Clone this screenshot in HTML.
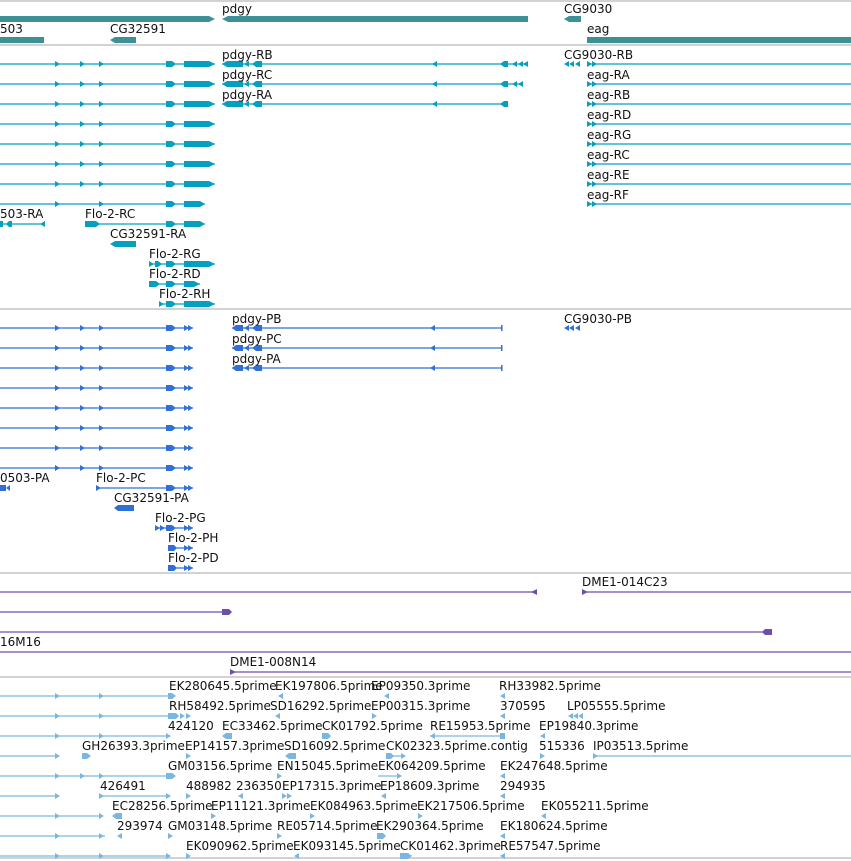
<!DOCTYPE html>
<html><head><meta charset="utf-8"><style>
html,body{margin:0;padding:0;background:#fff;width:851px;height:861px;overflow:hidden}
svg{display:block}
text{font-family:"DejaVu Sans","Liberation Sans",sans-serif;font-size:12px;fill:#111}
</style></head><body>
<svg width="851" height="861" viewBox="0 0 851 861" xmlns="http://www.w3.org/2000/svg">
<defs>
<polygon id="ar" points="0,-3 5,0 0,3"/>
<polygon id="al" points="5,-3 0,0 5,3"/>
</defs>
<g stroke="#c4c4c4" stroke-width="1.5">
<line x1="0" y1="1" x2="851" y2="1"/><line x1="0" y1="45" x2="851" y2="45"/>
<line x1="0" y1="309" x2="851" y2="309"/><line x1="0" y1="573" x2="851" y2="573"/>
<line x1="0" y1="677" x2="851" y2="677"/><line x1="0" y1="858" x2="851" y2="858"/>
</g>
<!-- gene track -->
<g fill="#3d9196">
<polygon points="0,16 209,16 215,19 209,22 0,22"/>
<polygon points="222,19 228,16 528,16 528,22 228,22"/>
<polygon points="564,19 569,16 581,16 581,22 569,22"/>
<rect x="0" y="37" width="44" height="6"/>
<polygon points="110,40 115,37 136,37 136,43 115,43"/>
<rect x="587" y="37" width="264" height="6"/>
</g>
<text x="222" y="13">pdgy</text><text x="564" y="13">CG9030</text>
<text x="0" y="33">503</text><text x="110" y="33">CG32591</text><text x="587" y="33">eag</text>
<!-- transcripts -->
<g fill="#069fc0" stroke="#069fc0">
<g stroke-width="1.2">
<line x1="0" y1="64" x2="215" y2="64"/><line x1="0" y1="84" x2="215" y2="84"/><line x1="0" y1="104" x2="215" y2="104"/>
<line x1="0" y1="124" x2="215" y2="124"/><line x1="0" y1="144" x2="215" y2="144"/><line x1="0" y1="164" x2="215" y2="164"/>
<line x1="0" y1="184" x2="215" y2="184"/><line x1="0" y1="204" x2="205" y2="204"/>
<line x1="222" y1="64" x2="528" y2="64"/><line x1="222" y1="84" x2="520" y2="84"/><line x1="222" y1="104" x2="507" y2="104"/>
<line x1="587" y1="64" x2="851" y2="64"/><line x1="587" y1="84" x2="851" y2="84"/><line x1="587" y1="104" x2="851" y2="104"/>
<line x1="587" y1="124" x2="851" y2="124"/><line x1="587" y1="144" x2="851" y2="144"/><line x1="587" y1="164" x2="851" y2="164"/>
<line x1="587" y1="184" x2="851" y2="184"/><line x1="587" y1="204" x2="851" y2="204"/>
<line x1="0" y1="224" x2="45" y2="224"/><line x1="85" y1="224" x2="205" y2="224"/>
<line x1="149" y1="264" x2="215" y2="264"/><line x1="149" y1="284" x2="200" y2="284"/><line x1="159" y1="304" x2="215" y2="304"/>
</g>
<g stroke="none">
<!-- left repeating exons -->
<g id="lx"><use href="#ar" x="55" y="64"/><use href="#ar" x="80" y="64"/><use href="#ar" x="99" y="64"/>
<polygon points="166,61 172,61 176,64 172,67 166,67"/><polygon points="184,61 209,61 215,64 209,67 184,67"/></g>
<use href="#lx" y="20"/><use href="#lx" y="40"/><use href="#lx" y="60"/><use href="#lx" y="80"/><use href="#lx" y="100"/><use href="#lx" y="120"/>
<use href="#ar" x="55" y="204"/><use href="#ar" x="99" y="204"/><polygon points="166,201 172,201 176,204 172,207 166,207"/><polygon points="184,201 200,201 205,204 200,207 184,207"/>
<!-- pdgy -->
<g id="pd"><polygon points="222,64 227,61 243,61 243,67 227,67"/><use href="#al" x="244" y="64"/><polygon points="252,64 256,61 262,61 262,67 256,67"/><use href="#al" x="432" y="64"/></g>
<use href="#pd" y="20"/><use href="#pd" y="40"/>
<polygon points="500,64 504,61 508,61 508,67 504,67"/><use href="#al" x="512" y="64"/><use href="#al" x="518" y="64"/><use href="#al" x="523" y="64"/>
<polygon points="500,84 504,81 508,81 508,87 504,87"/><use href="#al" x="512" y="84"/><use href="#al" x="518" y="84"/>
<polygon points="500,104 504,101 508,101 508,107 504,107"/>
<use href="#al" x="564" y="64"/><use href="#al" x="569" y="64"/><use href="#al" x="575" y="64"/>
<g id="eg"><use href="#ar" x="587" y="64"/><use href="#ar" x="592" y="64"/></g>
<use href="#eg" y="20"/><use href="#eg" y="40"/><use href="#eg" y="60"/><use href="#eg" y="80"/><use href="#eg" y="100"/><use href="#eg" y="120"/><use href="#eg" y="140"/>
<!-- 503-RA / Flo-2-RC -->
<polygon points="0,221 3,221 3,227 0,227"/><polygon points="6,224 9,221 12,221 12,227 9,227"/><use href="#al" x="40" y="224"/>
<polygon points="85,221 96,221 100,224 96,227 85,227"/><polygon points="166,221 172,221 176,224 172,227 166,227"/><polygon points="184,221 200,221 205,224 200,227 184,227"/>
<polygon points="110,244 115,241 136,241 136,247 115,247"/>
<use href="#ar" x="149" y="264"/><polygon points="155,261 158,261 162,264 158,267 155,267"/><polygon points="166,261 172,261 176,264 172,267 166,267"/><polygon points="184,261 209,261 215,264 209,267 184,267"/>
<polygon points="149,281 156,281 160,284 156,287 149,287"/><polygon points="166,281 172,281 176,284 172,287 166,287"/><polygon points="184,281 194,281 200,284 194,287 184,287"/>
<use href="#ar" x="159" y="304"/><polygon points="166,301 172,301 176,304 172,307 166,307"/><polygon points="184,301 209,301 215,304 209,307 184,307"/>
</g></g>
<text x="222" y="59">pdgy-RB</text><text x="222" y="79">pdgy-RC</text><text x="222" y="99">pdgy-RA</text>
<text x="564" y="59">CG9030-RB</text>
<text x="587" y="79">eag-RA</text><text x="587" y="99">eag-RB</text><text x="587" y="119">eag-RD</text><text x="587" y="139">eag-RG</text>
<text x="587" y="159">eag-RC</text><text x="587" y="179">eag-RE</text><text x="587" y="199">eag-RF</text>
<text x="0" y="218">503-RA</text><text x="85" y="218">Flo-2-RC</text><text x="110" y="238">CG32591-RA</text>
<text x="149" y="258">Flo-2-RG</text><text x="149" y="278">Flo-2-RD</text><text x="159" y="298">Flo-2-RH</text>
<!-- proteins -->
<g fill="#2f6fd6" stroke="#2f6fd6">
<g stroke-width="1.2">
<line x1="0" y1="328" x2="193" y2="328"/><line x1="0" y1="348" x2="193" y2="348"/><line x1="0" y1="368" x2="193" y2="368"/>
<line x1="0" y1="388" x2="193" y2="388"/><line x1="0" y1="408" x2="193" y2="408"/><line x1="0" y1="428" x2="193" y2="428"/>
<line x1="0" y1="448" x2="193" y2="448"/><line x1="0" y1="468" x2="193" y2="468"/><line x1="96" y1="488" x2="193" y2="488"/>
<line x1="232" y1="328" x2="502" y2="328"/><line x1="232" y1="348" x2="502" y2="348"/><line x1="232" y1="368" x2="502" y2="368"/>
<line x1="155" y1="528" x2="193" y2="528"/><line x1="168" y1="548" x2="193" y2="548"/><line x1="168" y1="568" x2="193" y2="568"/>
</g>
<g stroke="none">
<g id="px"><use href="#ar" x="55" y="328"/><use href="#ar" x="80" y="328"/><use href="#ar" x="99" y="328"/>
<polygon points="166,325 172,325 176,328 172,331 166,331"/><use href="#ar" x="184" y="328"/><use href="#ar" x="188" y="328"/></g>
<use href="#px" y="20"/><use href="#px" y="40"/><use href="#px" y="60"/><use href="#px" y="80"/><use href="#px" y="100"/><use href="#px" y="120"/><use href="#px" y="140"/>
<g id="pp"><polygon points="232,328 236,325 243,325 243,331 236,331"/><use href="#al" x="244" y="328"/><polygon points="252,328 256,325 262,325 262,331 256,331"/><use href="#al" x="430" y="328"/><rect x="501" y="325" width="1.5" height="6"/></g>
<use href="#pp" y="20"/><use href="#pp" y="40"/>
<use href="#al" x="564" y="328"/><use href="#al" x="569" y="328"/><use href="#al" x="575" y="328"/>
<polygon points="0,485 6,485 6,491 0,491"/><polygon points="6,488 10,485 10,491"/>
<use href="#ar" x="96" y="488"/><polygon points="166,485 172,485 176,488 172,491 166,491"/><use href="#ar" x="184" y="488"/><use href="#ar" x="188" y="488"/>
<polygon points="114,508 118,505 134,505 134,511 118,511"/>
<use href="#ar" x="155" y="528"/><use href="#ar" x="160" y="528"/><polygon points="166,525 172,525 176,528 172,531 166,531"/><use href="#ar" x="184" y="528"/><use href="#ar" x="188" y="528"/>
<polygon points="168,545 174,545 177,548 174,551 168,551"/><use href="#ar" x="184" y="548"/><use href="#ar" x="188" y="548"/>
<polygon points="168,565 174,565 177,568 174,571 168,571"/><use href="#ar" x="184" y="568"/><use href="#ar" x="188" y="568"/>
</g></g>
<text x="232" y="323">pdgy-PB</text><text x="232" y="343">pdgy-PC</text><text x="232" y="363">pdgy-PA</text><text x="564" y="323">CG9030-PB</text>
<text x="0" y="482">0503-PA</text><text x="96" y="482">Flo-2-PC</text><text x="114" y="502">CG32591-PA</text>
<text x="155" y="522">Flo-2-PG</text><text x="168" y="542">Flo-2-PH</text><text x="168" y="562">Flo-2-PD</text>
<!-- clones -->
<g fill="#6e4fae" stroke="#6e4fae">
<g stroke-width="1.2">
<line x1="0" y1="592" x2="537" y2="592"/><line x1="582" y1="592" x2="851" y2="592"/>
<line x1="0" y1="612" x2="231" y2="612"/><line x1="0" y1="632" x2="772" y2="632"/>
<line x1="0" y1="652" x2="851" y2="652"/><line x1="230" y1="672" x2="851" y2="672"/>
</g>
<g stroke="none">
<polygon points="531,592 537,589 537,595"/><polygon points="582,589 588,592 582,595"/>
<polygon points="222,609 229,609 232,612 229,615 222,615"/><polygon points="762,632 765,629 772,629 772,635 765,635"/>
<polygon points="230,669 236,672 230,675"/>
</g></g>
<text x="582" y="586">DME1-014C23</text><text x="0" y="646">16M16</text><text x="230" y="666">DME1-008N14</text>
<!-- ESTs -->
<g fill="#7ab6e0" stroke="#7ab6e0">
<g stroke-width="1.2">
<line x1="0" y1="696" x2="170" y2="696"/><line x1="0" y1="716" x2="170" y2="716"/><line x1="0" y1="736" x2="168" y2="736"/>
<line x1="0" y1="756" x2="58" y2="756"/><line x1="0" y1="776" x2="170" y2="776"/><line x1="0" y1="796" x2="58" y2="796"/>
<line x1="100" y1="796" x2="170" y2="796"/><line x1="0" y1="816" x2="100" y2="816"/><line x1="0" y1="836" x2="105" y2="836"/>
<line x1="0" y1="856" x2="170" y2="856"/>
<line x1="430" y1="736" x2="505" y2="736"/><line x1="386" y1="756" x2="405" y2="756"/><line x1="378" y1="776" x2="400" y2="776"/>
<line x1="593" y1="756" x2="851" y2="756"/>
</g>
<g stroke="none">
<use href="#ar" x="55" y="696"/><use href="#ar" x="99" y="696"/><polygon points="168,693 172,693 176,696 172,699 168,699"/>
<use href="#ar" x="55" y="716"/><use href="#ar" x="99" y="716"/><polygon points="168,713 176,713 179,716 176,719 168,719"/><use href="#ar" x="180" y="716"/><use href="#ar" x="186" y="716"/>
<use href="#ar" x="55" y="736"/><use href="#ar" x="99" y="736"/><use href="#ar" x="166" y="736"/>
<use href="#ar" x="55" y="756"/><polygon points="82,753 87,753 91,756 87,759 82,759"/><use href="#ar" x="186" y="756"/>
<use href="#ar" x="55" y="776"/><use href="#ar" x="80" y="776"/><use href="#ar" x="99" y="776"/><polygon points="166,773 172,773 176,776 172,779 166,779"/>
<use href="#ar" x="55" y="796"/><use href="#ar" x="99" y="796"/><use href="#ar" x="166" y="796"/><use href="#ar" x="186" y="796"/>
<use href="#ar" x="55" y="816"/><use href="#ar" x="99" y="816"/><polygon points="112,816 116,813 122,813 122,819 116,819"/><use href="#ar" x="211" y="816"/>
<use href="#ar" x="55" y="836"/><use href="#ar" x="99" y="836"/><use href="#al" x="117" y="836"/>
<use href="#ar" x="55" y="856"/><use href="#ar" x="99" y="856"/><use href="#ar" x="166" y="856"/><use href="#ar" x="186" y="856"/>
<!-- mid/right markers -->
<use href="#al" x="278" y="696"/><use href="#al" x="384" y="696"/><use href="#al" x="500" y="696"/>
<use href="#al" x="275" y="716"/><use href="#ar" x="372" y="716"/><use href="#al" x="500" y="716"/><use href="#al" x="568" y="716"/><use href="#al" x="573" y="716"/><use href="#al" x="578" y="716"/>
<polygon points="222,736 226,733 232,733 232,739 226,739"/><polygon points="322,733 328,733 331,736 328,739 322,739"/><use href="#al" x="430" y="736"/><polygon points="500,733 505,733 505,739 500,739"/><use href="#al" x="540" y="736"/>
<polygon points="285,756 289,753 296,753 296,759 289,759"/><polygon points="386,753 391,753 394,756 391,759 386,759"/><use href="#ar" x="401" y="756"/><use href="#ar" x="540" y="756"/><use href="#ar" x="593" y="756"/>
<use href="#ar" x="168" y="776"/><use href="#ar" x="277" y="776"/><use href="#ar" x="397" y="776"/><use href="#al" x="500" y="776"/>
<use href="#al" x="238" y="796"/><use href="#ar" x="282" y="796"/><use href="#ar" x="287" y="796"/><use href="#al" x="381" y="796"/><use href="#al" x="500" y="796"/>
<use href="#ar" x="310" y="816"/><use href="#ar" x="418" y="816"/><use href="#al" x="541" y="816"/>
<use href="#ar" x="168" y="836"/><use href="#ar" x="277" y="836"/><polygon points="377,833 383,833 386,836 383,839 377,839"/><use href="#al" x="500" y="836"/>
<use href="#al" x="294" y="856"/><polygon points="400,853 408,853 412,856 408,859 400,859"/><use href="#al" x="500" y="856"/>
</g></g>
<text x="169" y="690">EK280645.5prime</text><text x="275" y="690">EK197806.5prime</text><text x="371" y="690">EP09350.3prime</text><text x="499" y="690">RH33982.5prime</text>
<text x="169" y="710">RH58492.5prime</text><text x="270" y="710">SD16292.5prime</text><text x="371" y="710">EP00315.3prime</text><text x="500" y="710">370595</text><text x="567" y="710">LP05555.5prime</text>
<text x="168" y="730">424120</text><text x="222" y="730">EC33462.5prime</text><text x="322" y="730">CK01792.5prime</text><text x="430" y="730">RE15953.5prime</text><text x="539" y="730">EP19840.3prime</text>
<text x="82" y="750">GH26393.3prime</text><text x="185" y="750">EP14157.3prime</text><text x="284" y="750">SD16092.5prime</text><text x="386" y="750">CK02323.5prime.contig</text><text x="539" y="750">515336</text><text x="593" y="750">IP03513.5prime</text>
<text x="168" y="770">GM03156.5prime</text><text x="277" y="770">EN15045.5prime</text><text x="378" y="770">EK064209.5prime</text><text x="500" y="770">EK247648.5prime</text>
<text x="100" y="790">426491</text><text x="186" y="790">488982</text><text x="236" y="790">236350</text><text x="282" y="790">EP17315.3prime</text><text x="380" y="790">EP18609.3prime</text><text x="500" y="790">294935</text>
<text x="112" y="810">EC28256.5prime</text><text x="211" y="810">EP11121.3prime</text><text x="310" y="810">EK084963.5prime</text><text x="417" y="810">EK217506.5prime</text><text x="541" y="810">EK055211.5prime</text>
<text x="117" y="830">293974</text><text x="168" y="830">GM03148.5prime</text><text x="277" y="830">RE05714.5prime</text><text x="376" y="830">EK290364.5prime</text><text x="500" y="830">EK180624.5prime</text>
<text x="186" y="850">EK090962.5prime</text><text x="293" y="850">EK093145.5prime</text><text x="400" y="850">CK01462.3prime</text><text x="500" y="850">RE57547.5prime</text>
</svg>
</body></html>
